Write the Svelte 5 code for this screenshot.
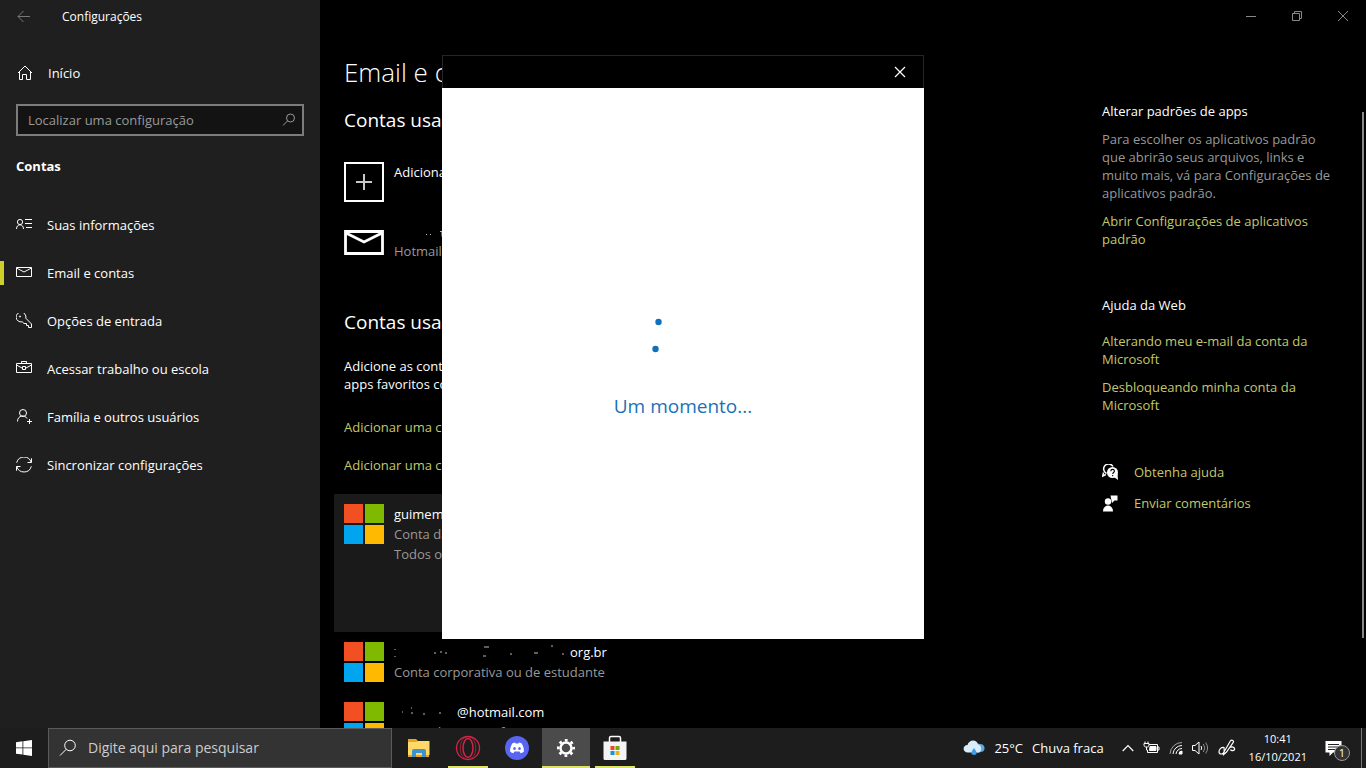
<script>
	const navItems = [
		{ id: 'info', label: 'Suas informações' },
		{ id: 'mail', label: 'Email e contas' },
		{ id: 'key', label: 'Opções de entrada' },
		{ id: 'work', label: 'Acessar trabalho ou escola' },
		{ id: 'family', label: 'Família e outros usuários' },
		{ id: 'sync', label: 'Sincronizar configurações' }
	];
	let active = $state('mail');
	let dialogOpen = $state(true);
	let query = $state('');
	let taskQuery = $state('');
</script>

{#snippet msLogo()}
	<svg class="ms-logo" width="40" height="40" viewBox="0 0 40 40" aria-hidden="true">
		<path fill="#f25022" d="M0 0h19v19H0z" />
		<path fill="#7fba00" d="M21 0h19v19H21z" />
		<path fill="#00a4ef" d="M0 21h19v19H0z" />
		<path fill="#ffb900" d="M21 21h19v19H21z" />
	</svg>
{/snippet}

{#snippet navIcon(id)}
	<svg class="line" width="16" height="16" viewBox="0 0 16 16" aria-hidden="true">
		{#if id === 'info'}
			<circle cx="4" cy="5" r="2.600" />
			<path d="M.5 12c0-5.600 7-5.600 7 0M9 2.500h7M9 6.500h7M10 10.500h6" />
		{:else if id === 'mail'}
			<path d="M.5 2.500h15v9H.5zM.5 3l7.500 4 7.500-4" />
		{:else if id === 'key'}
			<path d="M6.200 8.800A4.900 4.900 0 1 1 9.800 5.200l5.700 5.800v3.500h-3v-2h-2v-2H8z" />
			<circle cx="4" cy="3.500" r=".6" />
		{:else if id === 'work'}
			<path d="M.5 2.500h15v9H.5zM5.500 2.500v-2h5v2M.5 4l5.500 3M15.500 4 10 7M6.500 5.500h3v3h-3z" />
		{:else if id === 'family'}
			<circle cx="7" cy="4" r="3.500" />
			<path d="M1.500 12.500c0-6.500 7.500-7 9.500-3M13.500 10v5M11 12.500h5" />
		{:else}
			<path d="M.7 5.700A7.500 7.500 0 0 1 15.200 5.500M15.500 1.300v4.200h-4M15.300 9.300A7.500 7.500 0 0 1 .8 9.500M.5 13.700V9.500h4" />
		{/if}
	</svg>
{/snippet}

<div class="desktop">
	<div class="window">
		<aside class="sidebar">
			<header class="titlebar">
				<button class="back" aria-label="Voltar">
					<svg class="line" width="14" height="14" viewBox="0 0 14 14"><path d="M13 6.500H1M6.500 1 1 6.500 6.500 12" /></svg>
				</button>
				<span>Configurações</span>
			</header>
			<a class="home" href="#inicio">
				<svg class="line" width="16" height="16" viewBox="0 0 16 16" aria-hidden="true">
					<path d="M1 8 8 1l7 7M2.500 7v7.500h3v-5h4v5h4V7" />
				</svg>
				Início
			</a>
			<label class="search">
				<input type="text" placeholder="Localizar uma configuração" aria-label="Localizar uma configuração" bind:value={query} />
				<svg class="line" width="14" height="14" viewBox="0 0 14 14" aria-hidden="true">
					<circle cx="8.500" cy="5" r="4" /><path d="M5.600 7.900 1 12.500" />
				</svg>
			</label>
			<h3>Contas</h3>
			<nav>
				{#each navItems as item (item.id)}
					<a href="#{item.id}" class:active={active === item.id} onclick={() => (active = item.id)}>
						{@render navIcon(item.id)}
						{item.label}
					</a>
				{/each}
			</nav>
		</aside>

		<main>
			<h1>Email e contas</h1>
			<h2>Contas usadas por email</h2>
			<button class="row">
				<svg width="40" height="40" viewBox="0 0 40 40" aria-hidden="true">
					<path d="M1 1h38v38H1z" fill="none" stroke="#fff" stroke-width="2" />
					<path d="M12 20h16M20 12v16" stroke="#c8c8c8" stroke-width="2" />
				</svg>
				<span class="lines"><span>Adicionar conta</span></span>
			</button>
			<button class="row mail">
				<svg width="40" height="40" viewBox="0 0 40 40" aria-hidden="true">
					<path d="M1.500 9.500h37v22h-37zM2 11l18 9 18-9" fill="none" stroke="#fff" stroke-width="2.800" />
				</svg>
				<span class="lines">
					<svg class="redacted" width="60" height="19" viewBox="0 0 60 19" aria-hidden="true">
						<path d="M32 12.500h1M36 12.500h1M46 9.500h2v5" />
					</svg>
					<span class="dim">Hotmail</span>
				</span>
			</button>

			<h2 class="second">Contas usadas por outros aplicativos</h2>
			<p>Adicione as contas que você usa aqui para<br />apps favoritos com mais facilidade.</p>
			<a class="add" href="#ms">Adicionar uma conta da Microsoft</a>
			<a class="add" href="#work">Adicionar uma conta corporativa</a>

			<section class="account selected">
				{@render msLogo()}
				<div class="lines">
					<span>guimem</span>
					<span class="dim">Conta da Microsoft</span>
					<span class="dim">Todos os aplicativos</span>
				</div>
			</section>
			<section class="account">
				{@render msLogo()}
				<div class="lines">
					<span class="owner">
						<svg class="redacted" width="176" height="20" viewBox="0 0 176 20" aria-hidden="true">
							<path d="M1 7v1M1 14v1M40 11h2M46 10h2M51 11h2M90 5h5M89 14h3M116 12h2M140 11h4M157 4h2M168 12h2" />
						</svg>org.br
					</span>
					<span class="dim">Conta corporativa ou de estudante</span>
				</div>
			</section>
			<section class="account">
				{@render msLogo()}
				<div class="lines">
					<span class="owner">
						<svg class="redacted" width="63" height="20" viewBox="0 0 63 20" aria-hidden="true">
							<path d="M8 10h1M17 6h1M17 11h2M29 12h2M45 11h2" />
						</svg>@hotmail.com
					</span>
					<span class="dim">Conta da Microsoft</span>
				</div>
			</section>
		</main>

		<aside class="related">
			<h4>Alterar padrões de apps</h4>
			<p>Para escolher os aplicativos padrão que abrirão seus arquivos, links e muito mais, vá para Configurações de aplicativos padrão.</p>
			<a href="#padrao">Abrir Configurações de aplicativos padrão</a>
			<h4 class="web">Ajuda da Web</h4>
			<a href="#email">Alterando meu e-mail da conta da Microsoft</a>
			<a href="#desbloquear">Desbloqueando minha conta da Microsoft</a>
			<div class="help">
				<a href="#ajuda">
					<svg width="17" height="17" viewBox="0 0 17 17" aria-hidden="true">
						<path d="M4.500 9.500A5 5 0 1 1 11 2.500M1.500 8.500.800 12l3-1.500" fill="none" stroke="#fff" stroke-width="1.500" />
						<circle cx="10.500" cy="8.500" r="5.500" fill="#fff" /><path d="m12 13 4 3-.5-6z" fill="#fff" />
						<path d="M8.800 7.300c0-2.600 3.600-2.400 3.600-.2 0 1.400-1.700 1.400-1.700 3M10.700 11v1.200" fill="none" stroke="#000" stroke-width="1.100" />
					</svg>
					Obtenha ajuda
				</a>
				<a href="#comentarios">
					<svg width="17" height="17" viewBox="0 0 17 17" aria-hidden="true">
						<circle cx="6" cy="6.500" r="3.200" fill="#fff" />
						<path d="M1 16.500c0-8 10-8 10 0zM8.500.500h7v5h-3l-2.500 2.500z" fill="#fff" />
					</svg>
					Enviar comentários
				</a>
			</div>
		</aside>

		<div class="controls">
			<button aria-label="Minimizar"><svg class="line" width="10" height="10" viewBox="0 0 10 10"><path d="M0 5.500h10" /></svg></button>
			<button aria-label="Restaurar"><svg class="line" width="10" height="10" viewBox="0 0 10 10"><path d="M.5 2.500h7v7h-7zM2.500 2.500v-2h7v7h-2" /></svg></button>
			<button aria-label="Fechar"><svg class="line" width="10" height="10" viewBox="0 0 10 10"><path d="m0 0 10 10M10 0 0 10" /></svg></button>
		</div>
		<div class="scrollbar"></div>

		{#if dialogOpen}
			<div class="dialog" role="dialog" aria-label="Um momento">
				<header>
					<button aria-label="Fechar caixa" onclick={() => (dialogOpen = false)}>
						<svg class="line" width="12" height="12" viewBox="0 0 12 12"><path d="m1 1 10 10M11 1 1 11" stroke-width="1.200" /></svg>
					</button>
				</header>
				<div class="loading">
					<svg width="64" height="64" viewBox="0 0 64 64" aria-hidden="true" fill="#0f71bd">
						<circle cx="7.500" cy="16" r="3.200" />
						<circle cx="4.500" cy="43" r="3.200" />
					</svg>
					<span>Um momento...</span>
				</div>
			</div>
		{/if}
	</div>

	<footer class="taskbar">
		<button class="start" aria-label="Iniciar">
			<svg width="16" height="16" viewBox="0 0 16 16" fill="#fff"><path d="M0 2.200 6.500 1.300v6.200H0zM7.300 1.200 16 0v7.500H7.300zM0 8.300h6.500v6.300L0 13.700zM7.300 8.300H16V16l-8.700-1.200z" /></svg>
		</button>
		<label class="task-search">
			<svg class="line" width="18" height="18" viewBox="0 0 18 18" aria-hidden="true"><circle cx="11" cy="6.500" r="5.300" /><path d="M7.200 10.300 1 16.500" /></svg>
			<input type="text" placeholder="Digite aqui para pesquisar" aria-label="Digite aqui para pesquisar" bind:value={taskQuery} />
		</label>
		<div class="apps">
			<button aria-label="Explorador de Arquivos">
				<svg width="24" height="24" viewBox="0 0 24 24">
					<path d="M1 3h8l2 2h11v16H1z" fill="#e5a51f" /><path d="M1 6h8l2-1h11.500v14H1z" fill="#ffd868" />
					<path d="M5 21v-6q0-2 2-2h10q2 0 2 2v6h-4v-4H9v4z" fill="#3f92cc" />
				</svg>
			</button>
			<button class="open" aria-label="Opera">
				<svg width="26" height="26" viewBox="0 0 26 26" fill="none" stroke="#d32547">
					<circle cx="13" cy="13" r="11.500" stroke-width="1.300" /><ellipse cx="13" cy="13" rx="5" ry="9.500" stroke-width="1.500" />
					<path d="M12 1.500C3 4 3 22 12 24.500M14 1.500c9 2.500 9 20.500 0 23" opacity=".7" />
				</svg>
			</button>
			<button aria-label="Discord">
				<svg width="24" height="24" viewBox="0 0 24 24">
					<circle cx="12" cy="12" r="12" fill="#5865f2" />
					<path d="M7.500 7.200 10 6.500l.6 1h2.800l.6-1 2.500.7c1.800 2.700 2.700 5.600 2.300 8.500-1.100.9-2.200 1.300-3.200 1.500l-1-1.600H9.400l-1 1.600c-1-.2-2.100-.6-3.200-1.500-.4-2.900.5-5.800 2.300-8.500z" fill="#fff" />
					<ellipse cx="9.500" cy="12.500" rx="1.300" ry="1.500" fill="#5865f2" /><ellipse cx="14.500" cy="12.500" rx="1.300" ry="1.500" fill="#5865f2" />
				</svg>
			</button>
			<button class="current" aria-label="Configurações">
				<svg width="20" height="20" viewBox="0 0 20 20" fill="none" stroke="#fff">
					<circle cx="10" cy="10" r="5.500" stroke-width="2.500" />
					<circle cx="10" cy="10" r="7.700" stroke-width="2.600" stroke-dasharray="2.800 3.248" stroke-dashoffset="1.400" />
				</svg>
			</button>
			<button class="open" aria-label="Microsoft Store">
				<svg width="24" height="26" viewBox="0 0 24 26">
					<path d="M6.500 8V3q0-1.500 1.500-1.500h8q1.500 0 1.500 1.500v5" fill="none" stroke="#fff" stroke-width="1.500" />
					<path d="M.5 6.500h23v17q0 1.500-1.500 1.500H2Q.5 25 .5 23.500z" fill="#f4f4f4" />
					<path d="M7.500 11h4v4h-4z" fill="#e74a25" /><path d="M12.500 11h4v4h-4z" fill="#72a90b" />
					<path d="M7.500 16h4v4h-4z" fill="#1595d2" /><path d="M12.500 16h4v4h-4z" fill="#f0b01c" />
				</svg>
			</button>
		</div>

		<div class="tray">
			<button class="weather">
				<svg width="22" height="20" viewBox="0 0 22 20" aria-hidden="true">
					<path d="M13 14a4.500 4.500 0 0 0 4.500 0C23 14 23 6 17 6L12 5z" fill="#5ba9e2" />
					<path d="M5 14.500C-1 14.500-.5 7 4.500 7 6 1 14 1 15 6.500c4.500.5 4 8 0 8z" fill="#d9edfb" />
					<path d="M11 10q-5.500 7 0 7t0-7z" fill="#3c9fe4" />
				</svg>
				<span>25°C</span><span>Chuva fraca</span>
			</button>
			<button aria-label="Ícones ocultos"><svg class="line" width="12" height="10" viewBox="0 0 12 10"><path d="m.7 8 5.300-5.500L11.300 8" stroke-width="1.200" /></svg></button>
			<button aria-label="Bateria">
				<svg width="17" height="14" viewBox="0 0 17 14" fill="none" stroke="#fff">
					<path d="M6 3.500h8.500v8H4.500V9M14.500 6h1.500v3h-1.500M2 .5V3M5 .5V3M3.500 6v3h1" /><path d="M1 2.500h5v2.200L4.500 6h-2L1 4.700z" /><path d="M7 5.500h6v4H6.500z" fill="#fff" />
				</svg>
			</button>
			<button aria-label="Rede">
				<svg class="line" width="14" height="14" viewBox="0 0 14 14">
					<path d="M1 13A12 12 0 0 1 13 1.500" opacity=".6" /><path d="M4 13a9 9 0 0 1 9-8.500M7 13a6 6 0 0 1 6-5.500" /><path d="M10 13a3 3 0 0 1 3-3v3z" fill="#fff" />
				</svg>
			</button>
			<button aria-label="Volume">
				<svg class="line" width="17" height="14" viewBox="0 0 17 14">
					<path d="M.5 4.500h2.500l4-3.500v12L3 9.500H.500zM9 5q1.500 2 0 4" /><path d="M11.300 3q3 4 0 8M13.600 1.500q4 5.500 0 11" opacity=".5" />
				</svg>
			</button>
			<button aria-label="Caneta">
				<svg class="line" width="18" height="18" viewBox="0 0 18 18">
					<path d="M6 8.500c-3-.5-5 2-5 4.200 0 3 4 3 5 .3L12.500 1.800q1-1.300 2.300-.4t.3 2.300L8.500 13 5.700 15.500l.5-3.800zM12 8.500c3-1.500 5 .5 4.500 2s-3.500 1.500-4 0" stroke-width="1.200" />
				</svg>
			</button>
			<time><span>10:41</span><span>16/10/2021</span></time>
			<button class="notify" aria-label="Notificações">
				<svg width="17" height="17" viewBox="0 0 17 17"><path d="M.5 1h16v11.500H8L4.500 16v-3.500h-4z" fill="#fff" /><path d="M3 4.500h11M3 7h11M3 9.500h7" stroke="#222" /></svg>
				<span class="badge">1</span>
			</button>
		</div>
	</footer>
</div>

<style>
	:global(body) {
		margin: 0;
		background: #000;
	}
	.desktop {
		display: flex;
		flex-direction: column;
		height: 100vh;
		color: #fff;
		font: 13px/18px 'Open Sans', 'Noto Sans', sans-serif;
	}
	button {
		display: flex;
		align-items: center;
		justify-content: center;
		padding: 0;
		border: 0;
		background: none;
		color: inherit;
		font: inherit;
		text-align: left;
	}
	a {
		color: #c3c96a;
		text-decoration: none;
	}
	svg {
		flex: none;
	}
	.line {
		fill: none;
		stroke: currentColor;
	}
	h1, h2, h3, h4, p {
		margin: 0;
		font-weight: 400;
	}
	.window {
		position: relative;
		display: flex;
		flex: 1;
		min-height: 0;
		overflow: hidden;
	}

	/* sidebar */
	.sidebar {
		flex: none;
		width: 320px;
		background: #1f1f1f;
	}
	.titlebar {
		display: flex;
		align-items: center;
		height: 33px;
		font-size: 12px;
	}
	.back {
		width: 48px;
		margin-right: 14px;
		color: #777;
	}
	.home, nav a {
		display: flex;
		align-items: center;
		gap: 15px;
		height: 48px;
		padding-left: 16px;
		color: #fff;
	}
	.home {
		margin: 16px 0 7px;
		padding-left: 17px;
	}
	.search {
		display: flex;
		align-items: center;
		box-sizing: border-box;
		height: 32px;
		margin: 0 16px;
		padding: 0 6px 0 10px;
		border: 2px solid #7c7c7c;
		background: #131313;
		color: #999;
	}
	input {
		flex: 1;
		min-width: 0;
		padding: 0;
		border: 0;
		outline: 0;
		background: none;
		color: #fff;
		font: inherit;
	}
	input::placeholder {
		color: #999;
		opacity: 1;
	}
	h3 {
		margin: 20px 16px 25px;
		font-size: 13px;
		font-weight: 700;
		line-height: 20px;
	}
	nav a {
		position: relative;
	}
	nav a.active::before {
		content: '';
		position: absolute;
		left: 0;
		width: 4px;
		height: 24px;
		background: #cdd02c;
	}

	/* content */
	main {
		flex: 1;
		min-width: 0;
		padding: 56px 24px 0;
	}
	h1 {
		font-size: 26px;
		font-weight: 300;
		line-height: 32px;
	}
	h2 {
		margin: 20px 0 30px;
		font-size: 19px;
		line-height: 24px;
	}
	.second {
		margin: 48px 0 23px;
	}
	.row, .account {
		display: flex;
		align-items: flex-start;
		gap: 10px;
		white-space: nowrap;
	}
	.mail {
		margin-top: 20px;
	}
	.lines {
		display: flex;
		flex-direction: column;
		line-height: 20px;
	}
	.dim {
		color: #999;
	}
	.redacted {
		fill: none;
		stroke: #bbb;
	}
	main p {
		margin-bottom: 25px;
		white-space: nowrap;
	}
	.add {
		display: block;
		margin-bottom: 20px;
	}
	.account {
		max-width: 540px;
		margin-left: -10px;
		padding: 10px;
	}
	.selected {
		min-height: 118px;
		background: #1a1a1a;
	}
	.owner {
		display: flex;
	}

	/* related links */
	.related {
		flex: none;
		width: 240px;
		padding: 102px 24px 0 0;
	}
	.related > a {
		display: block;
		margin-top: 10px;
	}
	.related p {
		margin-top: 10px;
		color: #999;
	}
	.related .web {
		margin: 48px 0 18px;
	}
	.help {
		display: flex;
		flex-direction: column;
		gap: 13px;
		margin-top: 49px;
	}
	.help a {
		display: flex;
		align-items: center;
		gap: 15px;
	}
	.controls {
		position: absolute;
		top: 0;
		right: 0;
		display: flex;
		color: #888;
	}
	.controls button {
		width: 46px;
		height: 32px;
	}
	.scrollbar {
		position: absolute;
		top: 112px;
		right: 2px;
		bottom: 90px;
		width: 2px;
		background: #868686;
	}

	/* dialog */
	.dialog {
		position: absolute;
		top: 55px;
		right: 0;
		left: 0;
		display: flex;
		flex-direction: column;
		width: 482px;
		height: 584px;
		margin: 0 auto;
		background: #fff;
	}
	.dialog header {
		display: flex;
		justify-content: flex-end;
		box-sizing: border-box;
		height: 33px;
		border: 1px solid #262626;
		border-bottom: 0;
		background: #000;
	}
	.dialog header button {
		width: 46px;
	}
	.loading {
		display: flex;
		flex: 1;
		flex-direction: column;
		align-items: center;
		justify-content: center;
		gap: 24px;
		padding-bottom: 4px;
		color: #1a71b8;
		font-size: 19px;
		line-height: 24px;
	}

	/* taskbar */
	.taskbar {
		display: flex;
		flex: none;
		height: 40px;
		background: #1d1d1d;
	}
	.start {
		width: 48px;
	}
	.task-search {
		display: flex;
		align-items: center;
		gap: 11px;
		box-sizing: border-box;
		width: 344px;
		padding: 0 10px;
		border: 1px solid #5a5a5a;
		background: #333;
		font-size: 14px;
	}
	.task-search input::placeholder {
		color: #ccc;
	}
	.apps {
		display: flex;
		gap: 1px;
		margin-left: 3px;
	}
	.apps button {
		position: relative;
		width: 48px;
	}
	.apps .current {
		background: #4b4b4b;
	}
	.open::after, .current::after {
		content: '';
		position: absolute;
		right: 4px;
		bottom: 0;
		left: 4px;
		height: 2px;
		background: #dde266;
	}
	.current::after {
		right: 0;
		left: 0;
	}
	.tray {
		display: flex;
		align-items: center;
		gap: 9px;
		margin-left: auto;
		margin-right: 4px;
		padding-right: 10px;
		border-right: 1px solid #777;
	}
	.weather {
		gap: 9px;
		margin-right: 9px;
	}
	time {
		display: flex;
		flex-direction: column;
		align-items: center;
		margin-left: 4px;
		font-size: 11px;
	}
	.notify {
		position: relative;
		width: 36px;
		margin-left: -1px;
	}
	.badge {
		position: absolute;
		top: 5px;
		right: 1px;
		box-sizing: border-box;
		width: 16px;
		height: 16px;
		border: 1px solid #999;
		border-radius: 50%;
		background: #333;
		font-size: 11px;
		line-height: 14px;
		text-align: center;
	}
</style>
